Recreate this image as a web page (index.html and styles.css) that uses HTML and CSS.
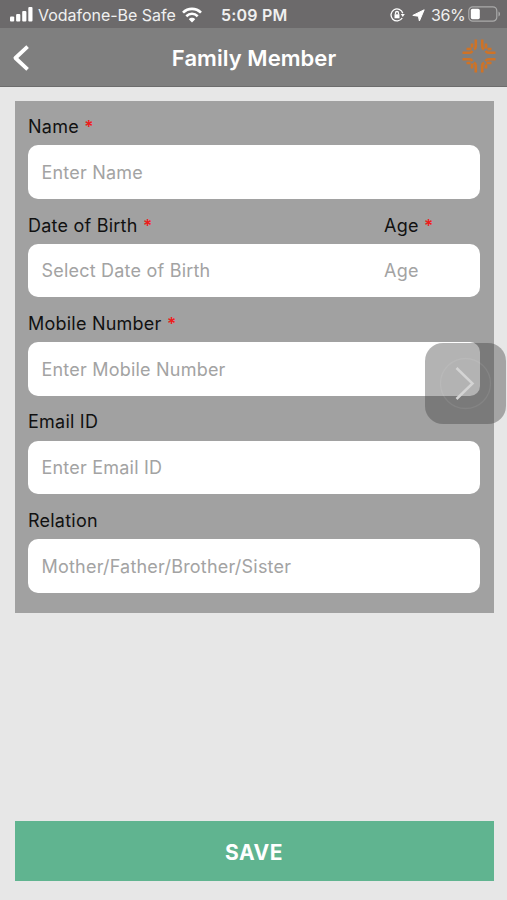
FILE: index.html
```html
<!DOCTYPE html>
<html lang="en">
<head>
<meta charset="utf-8">
<title>Family Member</title>
<link rel="stylesheet" href="styles.css">
</head>
<body>
<div class="screen">
  <div class="status">
    <svg class="signal" width="24" height="16" viewBox="0 0 24 16" fill="#fff"><rect x="0" y="10.5" width="4.2" height="5" rx="1"/><rect x="6.1" y="8" width="4.2" height="7.5" rx="1"/><rect x="12.2" y="5" width="4.2" height="10.5" rx="1"/><rect x="18.3" y="1" width="4.2" height="14.5" rx="1"/></svg>
    <span class="carrier">Vodafone-Be Safe</span>
    <svg class="wifi" width="20" height="16" viewBox="0 0 20 16" fill="none" stroke="#fff" stroke-width="2.6"><path d="M1 5.7C6 .6 14 .6 19 5.7"/><path d="M4.3 9.2C7.6 6 12.4 6 15.7 9.2"/><path d="M10 15.5 6.8 12.2C8.5 10.4 11.5 10.4 13.2 12.2Z" fill="#fff" stroke="none"/></svg>
    <span class="time">5:09 PM</span>
    <svg class="lock" width="15" height="14" viewBox="0 0 15 14" fill="none" stroke="#fff" stroke-width="1.3"><path d="M12.8 5.3A6 6 0 1 0 12.2 10"/><path d="M10.8 6.1h4l-2 3z" fill="#fff" stroke="none"/><rect x="4.5" y="6.3" width="5" height="4" fill="#fff" stroke="none"/><path d="M5.5 6.5V5a1.5 1.5 0 0 1 3 0v1.5"/></svg>
    <svg class="arrow" width="13" height="13" viewBox="0 0 13 13" fill="#fff" stroke="#fff" stroke-width="1" stroke-linejoin="round"><path d="M12.2.8 7.4 12 6.4 7.2.8 6.4z"/></svg>
    <span class="percent">36%</span>
    <svg class="battery" width="33" height="16" viewBox="0 0 33 16"><rect x=".8" y=".8" width="28" height="14.4" rx="4" fill="none" stroke="#aaa" stroke-width="1.2"/><rect x="2.8" y="2.8" width="9" height="10.4" rx="1.6" fill="#fff"/><path d="M30.5 5.5c2 .7 2 4.3 0 5z" fill="#aaa"/></svg>
  </div>
  <header class="header">
    <svg class="back" width="18" height="28" viewBox="0 0 18 28" fill="none" stroke="#fff" stroke-width="3.8" stroke-linejoin="round"><path d="M15.6 2.6 3.4 14 15.6 25.4"/></svg>
    <h1 class="title">Family Member</h1>
    <svg class="logo" width="36" height="36" viewBox="-18 -18 36 36" fill="none" stroke="#cf7326" stroke-width="2.6">
      <defs><g id="petal"><path d="M3.2-16.5V-9.5Q3.2-7.8 5-6.6M7-12.5v5M16.5-3.2H9.5Q7.8-3.2 6.6-5M12.5-7H8.6"/></g></defs>
      <use href="#petal"/><use href="#petal" transform="rotate(90)"/><use href="#petal" transform="rotate(180)"/><use href="#petal" transform="rotate(270)"/>
    </svg>
  </header>
  <main class="card">
    <div class="labels"><span>Name <b>*</b></span></div>
    <div class="field"><span>Enter Name</span></div>
    <div class="labels"><span class="wide">Date of Birth <b>*</b></span><span>Age <b>*</b></span></div>
    <div class="field"><span class="wide">Select Date of Birth</span><span>Age</span></div>
    <div class="labels"><span>Mobile Number <b>*</b></span></div>
    <div class="field"><span>Enter Mobile Number</span></div>
    <div class="labels"><span>Email ID</span></div>
    <div class="field"><span>Enter Email ID</span></div>
    <div class="labels"><span>Relation</span></div>
    <div class="field"><span>Mother/Father/Brother/Sister</span></div>
  </main>
  <div class="save">SAVE</div>
  <div class="assist"><svg width="81" height="81" viewBox="0 0 81 81" fill="none"><circle cx="40.5" cy="40.5" r="25" stroke="#fff" stroke-opacity=".08" stroke-width="1.3"/><path d="M31.5 25 47.5 40.5 31.5 56" stroke="#d4d4d4" stroke-width="2.5"/></svg></div>
</div>
</body>
</html>
```
FILE: styles.css
```css
* { box-sizing: border-box; }
body { margin: 0; background: #e7e7e7; font-family: Inter, "Liberation Sans", sans-serif; }
.screen { position: relative; width: 507px; height: 900px; overflow: hidden; display: flex; flex-direction: column; }
svg { display: block; flex: none; }
span { white-space: nowrap; flex: none; }
.status { height: 28px; flex: none; background: #6c6a6b; color: #f0f0f0; display: flex; align-items: center; padding: 2px 7px 0 10px; font-size: 16px; }
.signal { margin-top: -2px; }
.carrier { width: 139px; margin-left: 4px; letter-spacing: -.02px; }
.wifi { margin: -1px 0 0 5px; }
.time { width: 67px; margin-left: 19px; font-weight: 600; letter-spacing: .2px; }
.lock { margin-left: 102px; }
.arrow { margin-left: 7px; }
.percent { width: 34px; margin-left: 6px; letter-spacing: -.4px; }
.battery { margin: -2px 0 0 3px; }
.header { height: 59px; flex: none; background: #7f7f7f; border-bottom: 1px solid #6d6d6d; display: flex; align-items: center; justify-content: space-between; padding: 0 10px 0 12px; }
.back { margin-top: 2px; }
.title { margin: 2px 0 0 17px; color: #fff; font-size: 22px; font-weight: 600; line-height: 28px; letter-spacing: .05px; }
.logo { margin-top: -3px; }
.card { flex: none; margin: 13.6px 13.5px 0 14.5px; height: 512.4px; padding: 0 13.5px; background: #a1a1a1; }
.labels { height: 44.8px; display: flex; align-items: center; padding-top: 8.6px; font-size: 18px; line-height: 22px; letter-spacing: .23px; color: #111; }
.labels b { color: #ed1c1c; font-size: 17px; font-weight: 600; line-height: 1; }
.labels .wide { width: 356px; }
.field { height: 53.6px; background: #fff; border-radius: 10px; display: flex; align-items: center; padding: 1.5px 0 0 13.5px; font-size: 18px; line-height: 22px; letter-spacing: .21px; color: #a3a3a3; }
.field .wide { width: 342.5px; }
.save { flex: none; margin: auto 13.5px 19px 14.5px; height: 60px; background: #60b490; color: #fff; display: flex; align-items: center; justify-content: center; padding-top: 2px; font-size: 21px; font-weight: 700; letter-spacing: .5px; }
.assist { position: absolute; left: 425px; top: 342.5px; width: 81px; height: 81px; border-radius: 18px; background: rgba(65,65,65,.4); }
```
